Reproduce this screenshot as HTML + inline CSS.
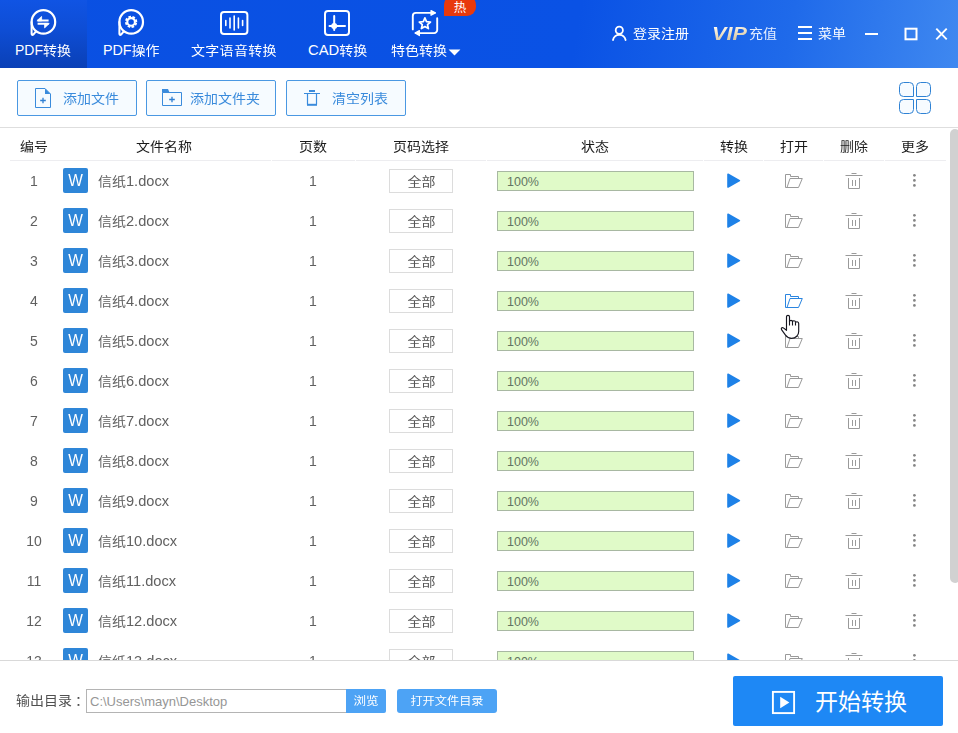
<!DOCTYPE html>
<html lang="zh-CN">
<head>
<meta charset="utf-8">
<title>PDF转换</title>
<style>
*{box-sizing:border-box;margin:0;padding:0}
html,body{width:958px;height:733px;overflow:hidden;background:#fff}
body{position:relative;font-family:"Liberation Sans","Noto Sans CJK SC",sans-serif;color:#333;font-size:14px}
#hdr{position:absolute;left:0;top:0;width:958px;height:68px;background:linear-gradient(100deg,#0a50e2 0%,#0a52e5 60%,#1f6aea 82%,#3f88f0 100%)}
#tabact{position:absolute;left:0;top:0;width:87px;height:68px;background:linear-gradient(180deg,#1054e4 0%,#0e4dd4 45%,#0a40b6 100%)}
.tab{position:absolute;top:40px;height:20px;line-height:20px;color:#fff;font-size:14px;white-space:nowrap}
.c{display:inline-block;transform:scaleY(.9);transform-origin:50% 55%}
.hr,.tbtn span,.th,#foot .lbl{transform:scaleY(.9);transform-origin:50% 55%}
.hi{position:absolute}
.hr{position:absolute;top:23px;color:#fff;font-size:14px;line-height:20px;white-space:nowrap}
#toolbar{position:absolute;left:0;top:68px;width:958px;height:60px;background:#fff;border-bottom:1px solid #dedede}
.tbtn{position:absolute;top:12px;height:36px;border:1px solid #4a98e2;border-radius:2px;background:#f6fbff;color:#3a8bdc;font-size:14px;line-height:34px;white-space:nowrap}
.tbtn span{position:absolute;top:0}
.tbtn svg{position:absolute}
#thead{position:absolute;left:0;top:128px;width:948px;height:33px}
.th{position:absolute;top:8px;height:20px;line-height:20px;font-size:14px;color:#1a1a1a;white-space:nowrap}
.hl{position:absolute;top:32px;height:1px;background:#ededf0}
.row{position:absolute;left:0;width:948px;height:40px}
.row .n{position:absolute;left:14px;width:40px;top:10px;line-height:20px;text-align:center;color:#606060;font-size:14px}
.row .w{position:absolute;left:63px;top:7px;width:25px;height:25px;background:#2e86d8;border-radius:2px;color:#fff;font-size:15.5px;line-height:25px;text-align:center}
.row .f{position:absolute;left:98px;top:10px;line-height:20px;color:#606060;font-size:14px;white-space:nowrap}
.row .f .l{font-size:14.6px;display:inline-block;transform:scaleY(1.06);transform-origin:50% 78%}
.row .n,.row .p{transform:scaleY(1.07);transform-origin:50% 80%}
.row .w span{display:block;transform:scaleY(1.06);transform-origin:50% 55%}
.row .p{position:absolute;left:293px;width:40px;top:10px;line-height:20px;text-align:center;color:#606060;font-size:14px}
.row .sel{position:absolute;left:389px;top:8px;width:64px;height:24px;border:1px solid #dcdcdc;background:#fff;color:#555;font-size:14px;line-height:22px;text-align:center;padding-left:1px}
.row .bar{position:absolute;left:497px;top:10px;width:197px;height:20px;border:1px solid #a8b8a2;background:#e0fac8;color:#637563;font-size:12.5px;line-height:20px;padding-left:9px}
.row .ic{position:absolute}
#foot{position:absolute;left:0;top:660px;width:958px;height:73px;background:#fff;border-top:1px solid #d9d9d9}
#foot .lbl{position:absolute;left:16px;top:29px;line-height:20px;font-size:14px;color:#505050;white-space:nowrap}
#foot .inp{position:absolute;left:86px;top:28px;width:261px;height:24px;border:1px solid #b4b4b4;background:#fff;color:#969696;font-size:13px;line-height:23px;padding-left:3px;white-space:nowrap}
#foot .b1{position:absolute;left:346px;top:28px;width:40px;height:24px;background:#4da3f5;border-radius:0 2px 2px 0;color:#fff;font-size:12.6px;line-height:25px;text-align:center}
#foot .b2{position:absolute;left:397px;top:28px;width:100px;height:24px;background:#4da3f5;border-radius:3px;color:#fff;font-size:12.2px;line-height:25px;text-align:center}
#foot .go{position:absolute;left:733px;top:15px;width:210px;height:50px;background:#1e88f5;border-radius:2px;color:#fff}
#foot .go span{position:absolute;left:82px;top:10px;font-size:23px;line-height:32px;white-space:nowrap}
#foot .go svg{position:absolute;left:38px;top:14px}
#sbt{position:absolute;left:950px;top:129px;width:10px;height:454px;background:#d1d1d1;border-radius:5px}
</style>
</head>
<body>
<div id="hdr"></div>
<div id="tabact"></div>

<!-- header icons -->
<svg class="hi" style="left:28px;top:7px" width="30" height="30" viewBox="0 0 30 30"><g fill="none" stroke="#fff" stroke-linecap="round" stroke-linejoin="round"><circle cx="15.4" cy="14.9" r="11.8" stroke-width="2.2"/><path d="M3.6 15 V26.6 Q3.7 28.7 5.5 27.4 L7.8 24.6" stroke-width="2"/><path d="M9.6 13.5 H20.6 M9.6 16.8 H20.6" stroke-width="2" stroke-linecap="butt"/><path d="M9.2 13.5 L13.6 9.4 V13.5 Z M21 16.8 L16.6 20.9 V16.8 Z" fill="#fff" stroke-width="0.8"/></g></svg>
<svg class="hi" style="left:116px;top:7px" width="30" height="30" viewBox="0 0 30 30"><g fill="none" stroke="#fff" stroke-linecap="round" stroke-linejoin="round"><circle cx="15.2" cy="14.9" r="11.8" stroke-width="2.2"/><path d="M3.4 15 V26.6 Q3.5 28.7 5.3 27.4 L7.6 24.6" stroke-width="2"/><circle cx="15.1" cy="14.9" r="3.8" stroke-width="2.1"/><circle cx="15.1" cy="14.9" r="5.2" stroke-width="1.9" stroke-linecap="butt" stroke-dasharray="2.6 1.484" stroke-dashoffset="-0.75"/></g></svg>
<svg class="hi" style="left:219px;top:10px" width="30" height="26" viewBox="0 0 30 26"><g fill="none" stroke="#fff" stroke-linecap="round"><rect x="2" y="2" width="26.4" height="22" rx="3" stroke-width="2"/><path d="M6.8 10.5 V15.5 M11 8 V18 M15.2 6 V20 M19.4 8 V18 M23.6 10.5 V15.5" stroke-width="1.6"/></g></svg>
<svg class="hi" style="left:323px;top:9px" width="28" height="28" viewBox="0 0 28 28"><g fill="none" stroke="#fff"><rect x="2" y="2" width="24" height="24" rx="3" stroke-width="2"/><path d="M11.2 7 V21 M6.5 17 H22" stroke-width="2" stroke-linecap="round"/><circle cx="11.2" cy="17" r="3" fill="#fff" stroke="none"/></g></svg>
<svg class="hi" style="left:410px;top:9px" width="30" height="28" viewBox="0 0 30 28"><g fill="none" stroke="#fff" stroke-width="1.9" stroke-linecap="round" stroke-linejoin="round"><path d="M2.8 20.4 V7 A3.1 3.1 0 0 1 5.9 3.9 H24.6"/><path d="M21 1.5 L25.4 3.9 L21 6.3 Z" fill="#fff" stroke-width="1.2"/><path d="M27.2 9.2 V21 A3.1 3.1 0 0 1 24.1 24.1 H6"/><path d="M9.4 21.6 L5 24.1 L9.4 26.6 Z" fill="#fff" stroke-width="1.2"/><path d="M14.9 8.3 L16.5 12.0 L20.5 12.4 L17.5 15.0 L18.4 19.0 L14.9 16.9 L11.4 19.0 L12.3 15.0 L9.3 12.4 L13.3 12.0 Z" stroke-width="1.7" transform="translate(0 .6)"/></g></svg>
<div class="hi" style="left:444px;top:-5px;width:32px;height:20.6px;background:#e8390d;border-radius:10px 10px 9px 0"></div>
<div class="hi" style="left:452px;top:1px;width:16px;height:15px;line-height:15px;font-size:12.5px;color:#fff;text-align:center">热</div>

<div class="tab" style="left:15px"><span style="font-size:14px">PDF</span><span class="c">转换</span></div>
<div class="tab" style="left:103px"><span style="font-size:14.3px">PDF</span><span class="c">操作</span></div>
<div class="tab c" style="left:191px;letter-spacing:.3px">文字语音转换</div>
<div class="tab" style="left:308px"><span style="font-size:14.8px">CAD</span><span class="c">转换</span></div>
<div class="tab c" style="left:391px">特色转换</div>
<svg class="hi" style="left:448px;top:49px" width="13" height="7" viewBox="0 0 13 7"><path d="M0.6 0.6 H12.4 L6.5 6.4 Z" fill="#fff"/></svg>

<!-- header right -->
<svg class="hi" style="left:610px;top:24px" width="19" height="19" viewBox="0 0 19 19"><g fill="none" stroke="#fff" stroke-width="1.8" stroke-linecap="round"><circle cx="9.3" cy="6.3" r="3.6"/><path d="M3 16 A6.4 6.4 0 0 1 15.6 16"/></g></svg>
<div class="hr" style="left:633px">登录注册</div>
<div class="hr" id="vip" style="left:712px;top:24px;font-size:19px;letter-spacing:0;font-weight:bold;font-style:italic;color:#e6dac0;background:linear-gradient(170deg,#fffaf0 15%,#e9dcc0 50%,#c9b692 90%);-webkit-background-clip:text;background-clip:text;-webkit-text-fill-color:transparent;padding-right:3px;transform-origin:0 50%;transform:scaleX(1.14)">VIP</div>
<div class="hr" style="left:749px;color:#e4eeff">充值</div>
<svg class="hi" style="left:797px;top:25px" width="16" height="16" viewBox="0 0 16 16"><path d="M1 2 H15 M1 8 H15 M1 14 H15" stroke="#fff" stroke-width="2"/></svg>
<div class="hr" style="left:818px">菜单</div>
<svg class="hi" style="left:864px;top:32px" width="15" height="4" viewBox="0 0 15 4"><path d="M1 2 H14" stroke="#fff" stroke-width="2"/></svg>
<svg class="hi" style="left:904px;top:27px" width="14" height="14" viewBox="0 0 14 14"><rect x="1.5" y="1.7" width="11" height="10.6" fill="none" stroke="#fff" stroke-width="2"/></svg>
<svg class="hi" style="left:935px;top:27px" width="13" height="14" viewBox="0 0 13 14"><path d="M1.3 1.6 L11.7 12.4 M11.7 1.6 L1.3 12.4" stroke="#fff" stroke-width="1.9"/></svg>

<!-- toolbar -->
<div id="toolbar">
<div class="tbtn" style="left:17px;width:120px"><svg style="left:16px;top:6px" width="18" height="22" viewBox="0 0 18 22"><path d="M1.5 1.5 H11 L16.5 7 V20.5 H1.5 Z" fill="none" stroke="#3a8bdc" stroke-width="1"/><path d="M11 1.5 L16.5 7 H11 Z" fill="#3a8bdc"/><path d="M6.2 13.5 H11.8 M9 10.7 V16.3" stroke="#2f7fd2" stroke-width="1.3"/></svg><span style="left:45px">添加文件</span></div>
<div class="tbtn" style="left:146px;width:130px"><svg style="left:14px;top:7px" width="22" height="19" viewBox="0 0 22 19"><path d="M1.5 4.5 H20.5 V17.5 H1.5 Z" fill="none" stroke="#3a8bdc" stroke-width="1"/><path d="M1 1 H7 L8.5 4.5 H1 Z" fill="#3a8bdc"/><path d="M8.2 11.5 H13.8 M11 8.7 V14.3" stroke="#2f7fd2" stroke-width="1.3"/></svg><span style="left:43px">添加文件夹</span></div>
<div class="tbtn" style="left:286px;width:120px"><svg style="left:16px;top:8px" width="18" height="18" viewBox="0 0 18 18"><path d="M6 2 H12" stroke="#3a8bdc" stroke-width="2"/><path d="M1 4.5 H17" stroke="#3a8bdc" stroke-width="1"/><path d="M4.5 4.5 V15.5 M13.5 4.5 V15.5" stroke="#3a8bdc" stroke-width="1.2"/><path d="M4 15.8 H14" stroke="#3a8bdc" stroke-width="2"/></svg><span style="left:45px">清空列表</span></div>
<svg style="position:absolute;left:898px;top:13px" width="34" height="34" viewBox="0 0 34 34"><g fill="#f7fbff" stroke="#2f82d4" stroke-width="1"><path d="M5.5 1.5 H11.5 A4 4 0 0 1 15.5 5.5 V15.5 H5.5 A4 4 0 0 1 1.5 11.5 V5.5 A4 4 0 0 1 5.5 1.5 Z"/><path d="M22.5 1.5 H28.5 A4 4 0 0 1 32.5 5.5 V11.5 A4 4 0 0 1 28.5 15.5 H18.5 V5.5 A4 4 0 0 1 22.5 1.5 Z"/><path d="M5.5 18.5 H15.5 V28.5 A4 4 0 0 1 11.5 32.5 H5.5 A4 4 0 0 1 1.5 28.5 V22.5 A4 4 0 0 1 5.5 18.5 Z"/><path d="M18.5 18.5 H28.5 A4 4 0 0 1 32.5 22.5 V28.5 A4 4 0 0 1 28.5 32.5 H22.5 A4 4 0 0 1 18.5 28.5 Z"/></g></svg>
</div>

<!-- table header -->
<div id="thead">
<div class="th" style="left:20px">编号</div>
<div class="th" style="left:136px">文件名称</div>
<div class="th" style="left:299px">页数</div>
<div class="th" style="left:393px">页码选择</div>
<div class="th" style="left:581px">状态</div>
<div class="th" style="left:720px">转换</div>
<div class="th" style="left:780px">打开</div>
<div class="th" style="left:840px">删除</div>
<div class="th" style="left:901px">更多</div>
<div class="hl" style="left:10px;width:261px"></div>
<div class="hl" style="left:272px;width:83px"></div>
<div class="hl" style="left:356px;width:130px"></div>
<div class="hl" style="left:487px;width:216px"></div>
<div class="hl" style="left:704px;width:59px"></div>
<div class="hl" style="left:764px;width:59px"></div>
<div class="hl" style="left:824px;width:60px"></div>
<div class="hl" style="left:885px;width:61px"></div>
</div>

<div id="rows">
<div class="row" style="top:161px">
<div class="n">1</div><div class="w"><span>W</span></div><div class="f"><span class="c">信纸</span><span class="l">1.docx</span></div><div class="p">1</div><div class="sel"><span class="c">全部</span></div><div class="bar">100%</div>
<svg class="ic" style="left:726px;top:11px" width="16" height="18" viewBox="0 0 16 18"><path d="M2 2.2 L13.4 8.6 L2 15 Z" fill="#1e82e8" stroke="#1e82e8" stroke-width="1.6" stroke-linejoin="round"/></svg>
<svg class="ic" style="left:784px;top:12px" width="20" height="16" viewBox="0 0 20 16"><path d="M1.5 14.5 V1.5 H6.5 V3.5 H14.5 V5.5 M3 14.5 L6 5.5 H18.3 L14.5 14.5 H1.5" fill="none" stroke="#9a9a9a" stroke-width="1"/></svg>
<svg class="ic" style="left:844px;top:11px" width="20" height="18" viewBox="0 0 20 18"><path d="M7.5 1.5 H12.5 M1.5 3.5 H18.5 M4.5 6 V16.5 H15.5 V6 M8.5 8 V14 M11.5 8 V14" fill="none" stroke="#9a9a9a" stroke-width="1"/></svg>
<svg class="ic" style="left:911px;top:12px" width="6" height="16" viewBox="0 0 6 16"><circle cx="3.4" cy="2.3" r="1.35" fill="#858585"/><circle cx="3.4" cy="7.4" r="1.35" fill="#858585"/><circle cx="3.4" cy="12.4" r="1.35" fill="#858585"/></svg>
</div>
<div class="row" style="top:201px">
<div class="n">2</div><div class="w"><span>W</span></div><div class="f"><span class="c">信纸</span><span class="l">2.docx</span></div><div class="p">1</div><div class="sel"><span class="c">全部</span></div><div class="bar">100%</div>
<svg class="ic" style="left:726px;top:11px" width="16" height="18" viewBox="0 0 16 18"><path d="M2 2.2 L13.4 8.6 L2 15 Z" fill="#1e82e8" stroke="#1e82e8" stroke-width="1.6" stroke-linejoin="round"/></svg>
<svg class="ic" style="left:784px;top:12px" width="20" height="16" viewBox="0 0 20 16"><path d="M1.5 14.5 V1.5 H6.5 V3.5 H14.5 V5.5 M3 14.5 L6 5.5 H18.3 L14.5 14.5 H1.5" fill="none" stroke="#9a9a9a" stroke-width="1"/></svg>
<svg class="ic" style="left:844px;top:11px" width="20" height="18" viewBox="0 0 20 18"><path d="M7.5 1.5 H12.5 M1.5 3.5 H18.5 M4.5 6 V16.5 H15.5 V6 M8.5 8 V14 M11.5 8 V14" fill="none" stroke="#9a9a9a" stroke-width="1"/></svg>
<svg class="ic" style="left:911px;top:12px" width="6" height="16" viewBox="0 0 6 16"><circle cx="3.4" cy="2.3" r="1.35" fill="#858585"/><circle cx="3.4" cy="7.4" r="1.35" fill="#858585"/><circle cx="3.4" cy="12.4" r="1.35" fill="#858585"/></svg>
</div>
<div class="row" style="top:241px">
<div class="n">3</div><div class="w"><span>W</span></div><div class="f"><span class="c">信纸</span><span class="l">3.docx</span></div><div class="p">1</div><div class="sel"><span class="c">全部</span></div><div class="bar">100%</div>
<svg class="ic" style="left:726px;top:11px" width="16" height="18" viewBox="0 0 16 18"><path d="M2 2.2 L13.4 8.6 L2 15 Z" fill="#1e82e8" stroke="#1e82e8" stroke-width="1.6" stroke-linejoin="round"/></svg>
<svg class="ic" style="left:784px;top:12px" width="20" height="16" viewBox="0 0 20 16"><path d="M1.5 14.5 V1.5 H6.5 V3.5 H14.5 V5.5 M3 14.5 L6 5.5 H18.3 L14.5 14.5 H1.5" fill="none" stroke="#9a9a9a" stroke-width="1"/></svg>
<svg class="ic" style="left:844px;top:11px" width="20" height="18" viewBox="0 0 20 18"><path d="M7.5 1.5 H12.5 M1.5 3.5 H18.5 M4.5 6 V16.5 H15.5 V6 M8.5 8 V14 M11.5 8 V14" fill="none" stroke="#9a9a9a" stroke-width="1"/></svg>
<svg class="ic" style="left:911px;top:12px" width="6" height="16" viewBox="0 0 6 16"><circle cx="3.4" cy="2.3" r="1.35" fill="#858585"/><circle cx="3.4" cy="7.4" r="1.35" fill="#858585"/><circle cx="3.4" cy="12.4" r="1.35" fill="#858585"/></svg>
</div>
<div class="row" style="top:281px">
<div class="n">4</div><div class="w"><span>W</span></div><div class="f"><span class="c">信纸</span><span class="l">4.docx</span></div><div class="p">1</div><div class="sel"><span class="c">全部</span></div><div class="bar">100%</div>
<svg class="ic" style="left:726px;top:11px" width="16" height="18" viewBox="0 0 16 18"><path d="M2 2.2 L13.4 8.6 L2 15 Z" fill="#1e82e8" stroke="#1e82e8" stroke-width="1.6" stroke-linejoin="round"/></svg>
<svg class="ic" style="left:784px;top:12px" width="20" height="16" viewBox="0 0 20 16"><path d="M1.5 14.5 V1.5 H6.5 V3.5 H14.5 V5.5 M3 14.5 L6 5.5 H18.3 L14.5 14.5 H1.5" fill="none" stroke="#2a85e0" stroke-width="1"/></svg>
<svg class="ic" style="left:844px;top:11px" width="20" height="18" viewBox="0 0 20 18"><path d="M7.5 1.5 H12.5 M1.5 3.5 H18.5 M4.5 6 V16.5 H15.5 V6 M8.5 8 V14 M11.5 8 V14" fill="none" stroke="#9a9a9a" stroke-width="1"/></svg>
<svg class="ic" style="left:911px;top:12px" width="6" height="16" viewBox="0 0 6 16"><circle cx="3.4" cy="2.3" r="1.35" fill="#858585"/><circle cx="3.4" cy="7.4" r="1.35" fill="#858585"/><circle cx="3.4" cy="12.4" r="1.35" fill="#858585"/></svg>
</div>
<div class="row" style="top:321px">
<div class="n">5</div><div class="w"><span>W</span></div><div class="f"><span class="c">信纸</span><span class="l">5.docx</span></div><div class="p">1</div><div class="sel"><span class="c">全部</span></div><div class="bar">100%</div>
<svg class="ic" style="left:726px;top:11px" width="16" height="18" viewBox="0 0 16 18"><path d="M2 2.2 L13.4 8.6 L2 15 Z" fill="#1e82e8" stroke="#1e82e8" stroke-width="1.6" stroke-linejoin="round"/></svg>
<svg class="ic" style="left:784px;top:12px" width="20" height="16" viewBox="0 0 20 16"><path d="M1.5 14.5 V1.5 H6.5 V3.5 H14.5 V5.5 M3 14.5 L6 5.5 H18.3 L14.5 14.5 H1.5" fill="none" stroke="#9a9a9a" stroke-width="1"/></svg>
<svg class="ic" style="left:844px;top:11px" width="20" height="18" viewBox="0 0 20 18"><path d="M7.5 1.5 H12.5 M1.5 3.5 H18.5 M4.5 6 V16.5 H15.5 V6 M8.5 8 V14 M11.5 8 V14" fill="none" stroke="#9a9a9a" stroke-width="1"/></svg>
<svg class="ic" style="left:911px;top:12px" width="6" height="16" viewBox="0 0 6 16"><circle cx="3.4" cy="2.3" r="1.35" fill="#858585"/><circle cx="3.4" cy="7.4" r="1.35" fill="#858585"/><circle cx="3.4" cy="12.4" r="1.35" fill="#858585"/></svg>
</div>
<div class="row" style="top:361px">
<div class="n">6</div><div class="w"><span>W</span></div><div class="f"><span class="c">信纸</span><span class="l">6.docx</span></div><div class="p">1</div><div class="sel"><span class="c">全部</span></div><div class="bar">100%</div>
<svg class="ic" style="left:726px;top:11px" width="16" height="18" viewBox="0 0 16 18"><path d="M2 2.2 L13.4 8.6 L2 15 Z" fill="#1e82e8" stroke="#1e82e8" stroke-width="1.6" stroke-linejoin="round"/></svg>
<svg class="ic" style="left:784px;top:12px" width="20" height="16" viewBox="0 0 20 16"><path d="M1.5 14.5 V1.5 H6.5 V3.5 H14.5 V5.5 M3 14.5 L6 5.5 H18.3 L14.5 14.5 H1.5" fill="none" stroke="#9a9a9a" stroke-width="1"/></svg>
<svg class="ic" style="left:844px;top:11px" width="20" height="18" viewBox="0 0 20 18"><path d="M7.5 1.5 H12.5 M1.5 3.5 H18.5 M4.5 6 V16.5 H15.5 V6 M8.5 8 V14 M11.5 8 V14" fill="none" stroke="#9a9a9a" stroke-width="1"/></svg>
<svg class="ic" style="left:911px;top:12px" width="6" height="16" viewBox="0 0 6 16"><circle cx="3.4" cy="2.3" r="1.35" fill="#858585"/><circle cx="3.4" cy="7.4" r="1.35" fill="#858585"/><circle cx="3.4" cy="12.4" r="1.35" fill="#858585"/></svg>
</div>
<div class="row" style="top:401px">
<div class="n">7</div><div class="w"><span>W</span></div><div class="f"><span class="c">信纸</span><span class="l">7.docx</span></div><div class="p">1</div><div class="sel"><span class="c">全部</span></div><div class="bar">100%</div>
<svg class="ic" style="left:726px;top:11px" width="16" height="18" viewBox="0 0 16 18"><path d="M2 2.2 L13.4 8.6 L2 15 Z" fill="#1e82e8" stroke="#1e82e8" stroke-width="1.6" stroke-linejoin="round"/></svg>
<svg class="ic" style="left:784px;top:12px" width="20" height="16" viewBox="0 0 20 16"><path d="M1.5 14.5 V1.5 H6.5 V3.5 H14.5 V5.5 M3 14.5 L6 5.5 H18.3 L14.5 14.5 H1.5" fill="none" stroke="#9a9a9a" stroke-width="1"/></svg>
<svg class="ic" style="left:844px;top:11px" width="20" height="18" viewBox="0 0 20 18"><path d="M7.5 1.5 H12.5 M1.5 3.5 H18.5 M4.5 6 V16.5 H15.5 V6 M8.5 8 V14 M11.5 8 V14" fill="none" stroke="#9a9a9a" stroke-width="1"/></svg>
<svg class="ic" style="left:911px;top:12px" width="6" height="16" viewBox="0 0 6 16"><circle cx="3.4" cy="2.3" r="1.35" fill="#858585"/><circle cx="3.4" cy="7.4" r="1.35" fill="#858585"/><circle cx="3.4" cy="12.4" r="1.35" fill="#858585"/></svg>
</div>
<div class="row" style="top:441px">
<div class="n">8</div><div class="w"><span>W</span></div><div class="f"><span class="c">信纸</span><span class="l">8.docx</span></div><div class="p">1</div><div class="sel"><span class="c">全部</span></div><div class="bar">100%</div>
<svg class="ic" style="left:726px;top:11px" width="16" height="18" viewBox="0 0 16 18"><path d="M2 2.2 L13.4 8.6 L2 15 Z" fill="#1e82e8" stroke="#1e82e8" stroke-width="1.6" stroke-linejoin="round"/></svg>
<svg class="ic" style="left:784px;top:12px" width="20" height="16" viewBox="0 0 20 16"><path d="M1.5 14.5 V1.5 H6.5 V3.5 H14.5 V5.5 M3 14.5 L6 5.5 H18.3 L14.5 14.5 H1.5" fill="none" stroke="#9a9a9a" stroke-width="1"/></svg>
<svg class="ic" style="left:844px;top:11px" width="20" height="18" viewBox="0 0 20 18"><path d="M7.5 1.5 H12.5 M1.5 3.5 H18.5 M4.5 6 V16.5 H15.5 V6 M8.5 8 V14 M11.5 8 V14" fill="none" stroke="#9a9a9a" stroke-width="1"/></svg>
<svg class="ic" style="left:911px;top:12px" width="6" height="16" viewBox="0 0 6 16"><circle cx="3.4" cy="2.3" r="1.35" fill="#858585"/><circle cx="3.4" cy="7.4" r="1.35" fill="#858585"/><circle cx="3.4" cy="12.4" r="1.35" fill="#858585"/></svg>
</div>
<div class="row" style="top:481px">
<div class="n">9</div><div class="w"><span>W</span></div><div class="f"><span class="c">信纸</span><span class="l">9.docx</span></div><div class="p">1</div><div class="sel"><span class="c">全部</span></div><div class="bar">100%</div>
<svg class="ic" style="left:726px;top:11px" width="16" height="18" viewBox="0 0 16 18"><path d="M2 2.2 L13.4 8.6 L2 15 Z" fill="#1e82e8" stroke="#1e82e8" stroke-width="1.6" stroke-linejoin="round"/></svg>
<svg class="ic" style="left:784px;top:12px" width="20" height="16" viewBox="0 0 20 16"><path d="M1.5 14.5 V1.5 H6.5 V3.5 H14.5 V5.5 M3 14.5 L6 5.5 H18.3 L14.5 14.5 H1.5" fill="none" stroke="#9a9a9a" stroke-width="1"/></svg>
<svg class="ic" style="left:844px;top:11px" width="20" height="18" viewBox="0 0 20 18"><path d="M7.5 1.5 H12.5 M1.5 3.5 H18.5 M4.5 6 V16.5 H15.5 V6 M8.5 8 V14 M11.5 8 V14" fill="none" stroke="#9a9a9a" stroke-width="1"/></svg>
<svg class="ic" style="left:911px;top:12px" width="6" height="16" viewBox="0 0 6 16"><circle cx="3.4" cy="2.3" r="1.35" fill="#858585"/><circle cx="3.4" cy="7.4" r="1.35" fill="#858585"/><circle cx="3.4" cy="12.4" r="1.35" fill="#858585"/></svg>
</div>
<div class="row" style="top:521px">
<div class="n">10</div><div class="w"><span>W</span></div><div class="f"><span class="c">信纸</span><span class="l">10.docx</span></div><div class="p">1</div><div class="sel"><span class="c">全部</span></div><div class="bar">100%</div>
<svg class="ic" style="left:726px;top:11px" width="16" height="18" viewBox="0 0 16 18"><path d="M2 2.2 L13.4 8.6 L2 15 Z" fill="#1e82e8" stroke="#1e82e8" stroke-width="1.6" stroke-linejoin="round"/></svg>
<svg class="ic" style="left:784px;top:12px" width="20" height="16" viewBox="0 0 20 16"><path d="M1.5 14.5 V1.5 H6.5 V3.5 H14.5 V5.5 M3 14.5 L6 5.5 H18.3 L14.5 14.5 H1.5" fill="none" stroke="#9a9a9a" stroke-width="1"/></svg>
<svg class="ic" style="left:844px;top:11px" width="20" height="18" viewBox="0 0 20 18"><path d="M7.5 1.5 H12.5 M1.5 3.5 H18.5 M4.5 6 V16.5 H15.5 V6 M8.5 8 V14 M11.5 8 V14" fill="none" stroke="#9a9a9a" stroke-width="1"/></svg>
<svg class="ic" style="left:911px;top:12px" width="6" height="16" viewBox="0 0 6 16"><circle cx="3.4" cy="2.3" r="1.35" fill="#858585"/><circle cx="3.4" cy="7.4" r="1.35" fill="#858585"/><circle cx="3.4" cy="12.4" r="1.35" fill="#858585"/></svg>
</div>
<div class="row" style="top:561px">
<div class="n">11</div><div class="w"><span>W</span></div><div class="f"><span class="c">信纸</span><span class="l">11.docx</span></div><div class="p">1</div><div class="sel"><span class="c">全部</span></div><div class="bar">100%</div>
<svg class="ic" style="left:726px;top:11px" width="16" height="18" viewBox="0 0 16 18"><path d="M2 2.2 L13.4 8.6 L2 15 Z" fill="#1e82e8" stroke="#1e82e8" stroke-width="1.6" stroke-linejoin="round"/></svg>
<svg class="ic" style="left:784px;top:12px" width="20" height="16" viewBox="0 0 20 16"><path d="M1.5 14.5 V1.5 H6.5 V3.5 H14.5 V5.5 M3 14.5 L6 5.5 H18.3 L14.5 14.5 H1.5" fill="none" stroke="#9a9a9a" stroke-width="1"/></svg>
<svg class="ic" style="left:844px;top:11px" width="20" height="18" viewBox="0 0 20 18"><path d="M7.5 1.5 H12.5 M1.5 3.5 H18.5 M4.5 6 V16.5 H15.5 V6 M8.5 8 V14 M11.5 8 V14" fill="none" stroke="#9a9a9a" stroke-width="1"/></svg>
<svg class="ic" style="left:911px;top:12px" width="6" height="16" viewBox="0 0 6 16"><circle cx="3.4" cy="2.3" r="1.35" fill="#858585"/><circle cx="3.4" cy="7.4" r="1.35" fill="#858585"/><circle cx="3.4" cy="12.4" r="1.35" fill="#858585"/></svg>
</div>
<div class="row" style="top:601px">
<div class="n">12</div><div class="w"><span>W</span></div><div class="f"><span class="c">信纸</span><span class="l">12.docx</span></div><div class="p">1</div><div class="sel"><span class="c">全部</span></div><div class="bar">100%</div>
<svg class="ic" style="left:726px;top:11px" width="16" height="18" viewBox="0 0 16 18"><path d="M2 2.2 L13.4 8.6 L2 15 Z" fill="#1e82e8" stroke="#1e82e8" stroke-width="1.6" stroke-linejoin="round"/></svg>
<svg class="ic" style="left:784px;top:12px" width="20" height="16" viewBox="0 0 20 16"><path d="M1.5 14.5 V1.5 H6.5 V3.5 H14.5 V5.5 M3 14.5 L6 5.5 H18.3 L14.5 14.5 H1.5" fill="none" stroke="#9a9a9a" stroke-width="1"/></svg>
<svg class="ic" style="left:844px;top:11px" width="20" height="18" viewBox="0 0 20 18"><path d="M7.5 1.5 H12.5 M1.5 3.5 H18.5 M4.5 6 V16.5 H15.5 V6 M8.5 8 V14 M11.5 8 V14" fill="none" stroke="#9a9a9a" stroke-width="1"/></svg>
<svg class="ic" style="left:911px;top:12px" width="6" height="16" viewBox="0 0 6 16"><circle cx="3.4" cy="2.3" r="1.35" fill="#858585"/><circle cx="3.4" cy="7.4" r="1.35" fill="#858585"/><circle cx="3.4" cy="12.4" r="1.35" fill="#858585"/></svg>
</div>
<div class="row" style="top:641px">
<div class="n">13</div><div class="w"><span>W</span></div><div class="f"><span class="c">信纸</span><span class="l">13.docx</span></div><div class="p">1</div><div class="sel"><span class="c">全部</span></div><div class="bar">100%</div>
<svg class="ic" style="left:726px;top:11px" width="16" height="18" viewBox="0 0 16 18"><path d="M2 2.2 L13.4 8.6 L2 15 Z" fill="#1e82e8" stroke="#1e82e8" stroke-width="1.6" stroke-linejoin="round"/></svg>
<svg class="ic" style="left:784px;top:12px" width="20" height="16" viewBox="0 0 20 16"><path d="M1.5 14.5 V1.5 H6.5 V3.5 H14.5 V5.5 M3 14.5 L6 5.5 H18.3 L14.5 14.5 H1.5" fill="none" stroke="#9a9a9a" stroke-width="1"/></svg>
<svg class="ic" style="left:844px;top:11px" width="20" height="18" viewBox="0 0 20 18"><path d="M7.5 1.5 H12.5 M1.5 3.5 H18.5 M4.5 6 V16.5 H15.5 V6 M8.5 8 V14 M11.5 8 V14" fill="none" stroke="#9a9a9a" stroke-width="1"/></svg>
<svg class="ic" style="left:911px;top:12px" width="6" height="16" viewBox="0 0 6 16"><circle cx="3.4" cy="2.3" r="1.35" fill="#858585"/><circle cx="3.4" cy="7.4" r="1.35" fill="#858585"/><circle cx="3.4" cy="12.4" r="1.35" fill="#858585"/></svg>
</div>
</div>

<div id="sbt"></div>

<!-- hand cursor -->
<svg style="position:absolute;left:780px;top:314px" width="21" height="27" viewBox="0 0 21 27"><path d="M6.5 15.4 V2.8 A1.5 1.5 0 0 1 9.5 2.8 V7.4 Q9.7 6.3 11 6.3 Q12.4 6.3 12.5 7.7 Q12.7 6.7 14 6.7 Q15.4 6.7 15.5 8.3 Q15.8 7.8 17.2 7.8 Q18.7 7.9 18.7 9.6 V17.5 C18.7 21 16 24.4 11.5 24.4 C8.5 24.4 6.8 23 5.5 21.2 L1.7 15.9 C0.6 14.3 2 13 3.4 13.9 L6.5 16.3 Z" fill="#fff" stroke="#15151f" stroke-width="1.15" stroke-linejoin="round"/><path d="M9.5 7 V11.6 M12.5 7.6 V11.6 M15.5 8.2 V11.6" stroke="#15151f" stroke-width="1.1" fill="none"/></svg>

<div id="foot">
<div class="lbl">输出目录<span style="margin-left:3px">：</span></div>
<div class="inp">C:\Users\mayn\Desktop</div>
<div class="b1"><span class="c">浏览</span></div>
<div class="b2"><span class="c">打开文件目录</span></div>
<div class="go"><svg width="25" height="25" viewBox="0 0 25 25"><rect x="1.9" y="1.9" width="21.2" height="21.2" fill="none" stroke="#fff" stroke-width="1.9"/><path d="M9.2 6.8 L18.4 12.5 L9.2 18.2 Z" fill="#fff"/></svg><span>开始转换</span></div>
</div>
</body>
</html>
